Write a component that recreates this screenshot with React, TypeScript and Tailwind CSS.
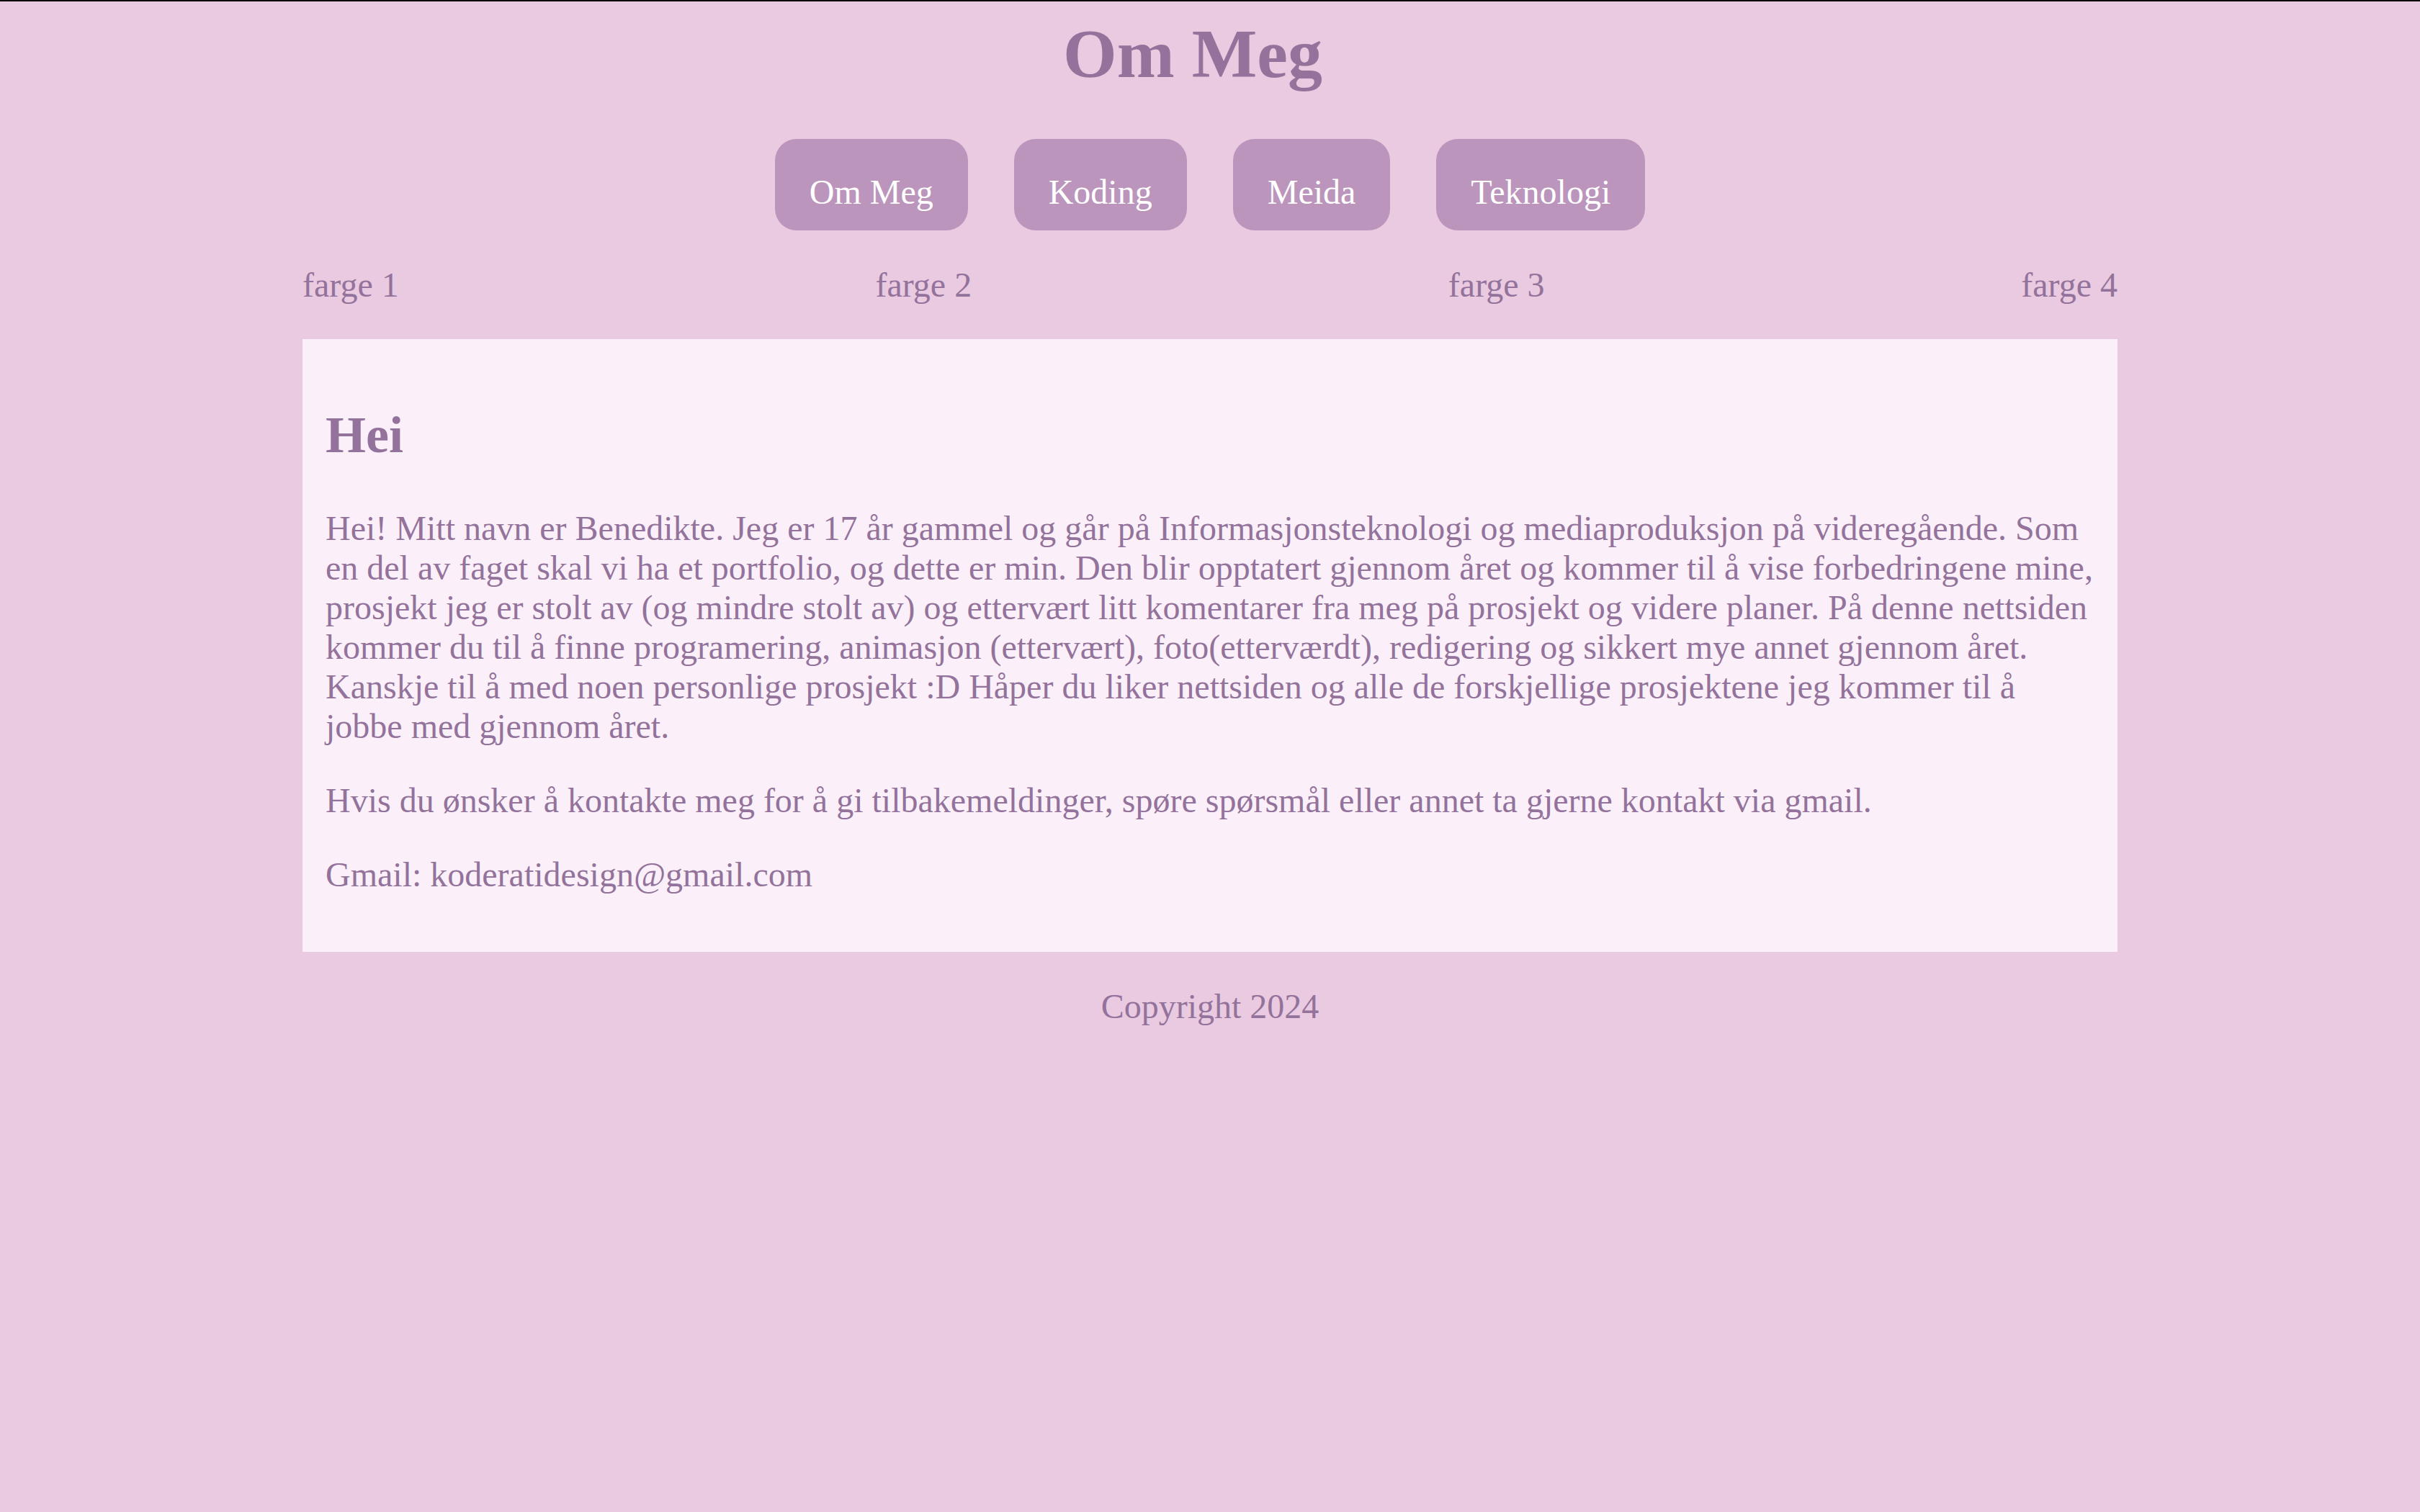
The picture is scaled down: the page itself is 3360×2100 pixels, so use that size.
import React from 'react';

const navItems = ['Om Meg', 'Koding', 'Meida', 'Teknologi'];
const colors = ['farge 1', 'farge 2', 'farge 3', 'farge 4'];

const App: React.FC = () => {
  return (
    <div className="min-h-screen border-t-2 border-black bg-[#e9cae0] font-['Liberation_Serif','Times_New_Roman',serif] text-[48px] leading-[normal] text-[#93739b]">
      {/* Header */}
      <h1 className="mt-[17px] pr-[48px] text-center text-[96px] font-bold">Om Meg</h1>

      {/* Navigation */}
      <nav className="mt-[63px] flex justify-center gap-[64px]">
        {navItems.map((item) => (
          <a
            key={item}
            href="#"
            className="rounded-[30px] bg-[#bc95bd] px-[48px] pt-[46px] pb-[26px] text-white"
          >
            {item}
          </a>
        ))}
      </nav>

      {/* Colour row */}
      <div className="mx-auto mt-[48px] flex w-3/4 justify-between">
        {colors.map((c) => (
          <span key={c}>{c}</span>
        ))}
      </div>

      {/* Main content */}
      <main className="mx-auto mt-[48px] w-3/4 bg-[#fbf0f9] p-[32px]">
        <h2 className="my-[60px] text-[72px] font-bold">Hei</h2>
        <p className="my-[48px]">
          Hei! Mitt navn er Benedikte. Jeg er 17 år gammel og går på Informasjonsteknologi og mediaproduksjon på videregående. Som en del av faget skal vi ha et portfolio, og dette er min. Den blir opptatert gjennom året og kommer til å vise forbedringene mine, prosjekt jeg er stolt av (og mindre stolt av) og ettervært litt komentarer fra meg på prosjekt og videre planer. På denne nettsiden kommer du til å finne programering, animasjon (ettervært), foto(etterværdt), redigering og sikkert mye annet gjennom året. Kanskje til å med noen personlige prosjekt :D Håper du liker nettsiden og alle de forskjellige prosjektene jeg kommer til å jobbe med gjennom året.
        </p>
        <p className="my-[48px]">
          Hvis du ønsker å kontakte meg for å gi tilbakemeldinger, spøre spørsmål eller annet ta gjerne kontakt via gmail.
        </p>
        <p className="my-[48px]">Gmail: koderatidesign@gmail.com</p>
      </main>

      {/* Footer */}
      <footer className="mt-[48px] text-center">Copyright 2024</footer>
    </div>
  );
};

export default App;
